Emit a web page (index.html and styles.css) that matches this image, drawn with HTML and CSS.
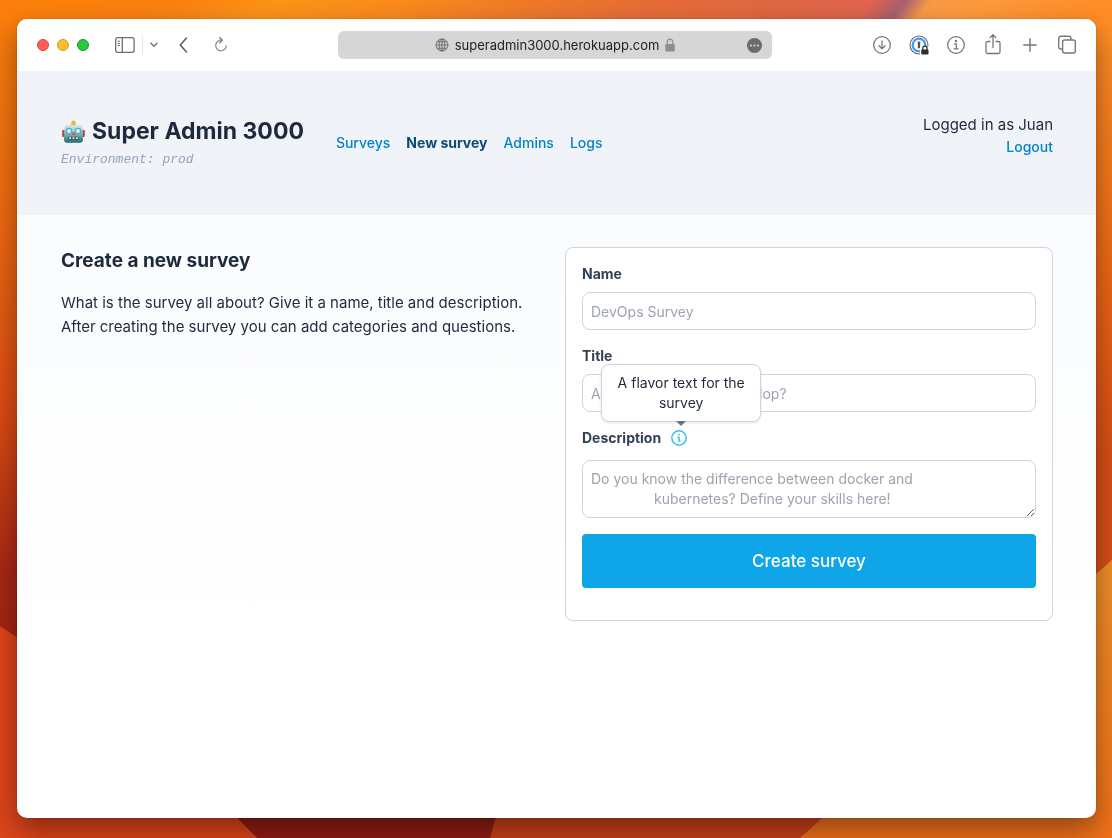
FILE: index.html
```html
<!DOCTYPE html>
<html lang="en">
<head>
<meta charset="utf-8">
<meta name="viewport" content="width=device-width, initial-scale=1">
<title>Super Admin 3000</title>
<link rel="stylesheet" href="styles.css">
</head>
<body>
<svg class="wallpaper" viewBox="0 0 1112 838" preserveAspectRatio="none" aria-hidden="true">
  <defs>
    <linearGradient id="left" x1="0" y1="0" x2="0" y2="1">
      <stop offset="0" stop-color="#fb7f0a"/><stop offset=".25" stop-color="#ee6a10"/><stop offset=".5" stop-color="#d94a14"/><stop offset=".68" stop-color="#a92814"/><stop offset=".78" stop-color="#a32414"/>
    </linearGradient>
    <linearGradient id="top" gradientUnits="userSpaceOnUse" x1="0" y1="0" x2="1112" y2="0" gradientTransform="skewX(-38)">
      <stop offset="0" stop-color="#fb7f0a"/><stop offset=".16" stop-color="#fb8210"/><stop offset=".25" stop-color="#fd9318"/><stop offset=".36" stop-color="#fa8b1c"/><stop offset=".47" stop-color="#f07a28"/><stop offset=".6" stop-color="#e56c38"/><stop offset=".72" stop-color="#e06644"/><stop offset=".785" stop-color="#e0644e"/><stop offset=".815" stop-color="#a86070"/><stop offset=".838" stop-color="#f89a48"/><stop offset=".88" stop-color="#ff9a3c"/><stop offset="1" stop-color="#ff8c26"/>
    </linearGradient>
    <linearGradient id="right" x1="0" y1="0" x2="0" y2="1">
      <stop offset="0" stop-color="#ff8f28"/><stop offset=".25" stop-color="#f5761a"/><stop offset=".45" stop-color="#ea6216"/><stop offset=".68" stop-color="#d84e16"/>
    </linearGradient>
    <linearGradient id="corner" x1="0" y1="0" x2="0" y2="1">
      <stop offset="0" stop-color="#f0902a"/><stop offset="1" stop-color="#f0701a"/>
    </linearGradient>
  </defs>
  <rect width="1112" height="838" fill="url(#left)"/>
  <rect x="900" y="19" width="212" height="640" fill="url(#right)"/>
  <rect width="1112" height="20" fill="url(#top)"/>
  <path d="M0 626L110 700L262 838H0Z" fill="#dd451a"/>
  <path d="M200 780L257 838H500V780Z" fill="#8f1c14"/>
  <path d="M506 780L490 838H1112V700H506Z" fill="#c8401a"/>
  <path d="M1112 560L800 838H1112Z" fill="url(#corner)"/>
</svg>
<div class="window">
  <div class="toolbar">
    <div class="tools">
      <div class="lights"><span class="light red"></span><span class="light yellow"></span><span class="light green"></span></div>
      <div class="sidebar-group">
        <button class="tool" aria-label="Sidebar"><svg width="20" height="16" viewBox="0 0 20 16" fill="none" stroke="#6e6e6e" stroke-width="1.3"><rect x=".7" y=".7" width="18.4" height="14.6" rx="2"/><path d="M7.3 1V15"/><path d="M2.7 4.2H5M2.7 6.4H5M2.7 8.6H5" stroke-width="1"/></svg></button>
        <span class="divider"></span>
        <button class="tool" aria-label="Tab groups"><svg width="8" height="6" viewBox="0 0 8 6" fill="none" stroke="#777" stroke-width="1.5" stroke-linecap="round" stroke-linejoin="round"><path d="M1 1.2L4 4.2L7 1.2"/></svg></button>
      </div>
      <button class="tool" aria-label="Back"><svg width="9" height="16" viewBox="0 0 9 16" fill="none" stroke="#5f5f5f" stroke-width="1.6" stroke-linecap="round" stroke-linejoin="round"><path d="M7.5 1L1.3 8L7.5 15"/></svg></button>
      <button class="tool reload" aria-label="Reload"><svg width="14" height="16" viewBox="0 0 14 16" fill="none" stroke="#999" stroke-width="1.4" stroke-linecap="round" stroke-linejoin="round"><path d="M7.6 3.2A5.3 5.3 0 1 0 12.3 8.600"/><path d="M5.800 .8L8.300 3.300L5.800 5.800" stroke="#777"/></svg></button>
    </div>
    <div class="address">
      <span class="site">
        <svg width="14" height="14" viewBox="0 0 14 14" fill="none" stroke="#666" stroke-width=".9"><circle cx="7" cy="7" r="6"/><ellipse cx="7" cy="7" rx="2.9" ry="6"/><path d="M7 1V13M1 7H13M2 3.8H12M2 10.2H12"/></svg>
        <span>superadmin3000.herokuapp.com</span>
        <svg width="10" height="14" viewBox="0 0 10 14"><path d="M2.3 6.500V4A2.700 2.900 0 0 1 7.700 4V6.500" fill="none" stroke="#929292" stroke-width="1.300"/><rect x=".3" y="6" width="9.400" height="7.500" rx="1.200" fill="#8e8e8e"/></svg>
      </span>
      <button class="tool more" aria-label="Page menu"><svg width="15" height="15" viewBox="0 0 15 15"><circle cx="7.500" cy="7.500" r="7.500" fill="#6b6b6b"/><g fill="#d6d6d6"><circle cx="4" cy="7.500" r="1.100"/><circle cx="7.500" cy="7.500" r="1.100"/><circle cx="11" cy="7.500" r="1.100"/></g></svg></button>
    </div>
    <div class="actions">
      <button class="tool" aria-label="Downloads"><svg width="20" height="22" viewBox="0 0 20 22" fill="none" stroke="#777" stroke-width="1.300" stroke-linecap="round" stroke-linejoin="round"><circle cx="10" cy="11" r="8.300"/><path d="M10 7V14.500M7 11.800L10 14.800L13 11.800"/></svg></button>
      <button class="tool" aria-label="Password manager"><svg width="20" height="22" viewBox="0 0 20 22" fill="none"><circle cx="10" cy="11" r="9" stroke="#666" stroke-width="1.100"/><circle cx="10" cy="11" r="6.300" stroke="#419df8" stroke-width="2.300"/><rect x="8.800" y="7.500" width="2.400" height="6.800" rx=".6" fill="#555"/><path d="M11 12.500H20V22H11Z" fill="#fff"/><path d="M13.800 16V14.200A2.100 2.100 0 0 1 18 14.200V16" stroke="#2d2d2d" stroke-width="1.300"/><rect x="12.300" y="15.500" width="7.200" height="5" rx=".8" fill="#2d2d2d"/></svg></button>
      <button class="tool" aria-label="Page info"><svg width="20" height="22" viewBox="0 0 20 22" fill="none" stroke="#777" stroke-width="1.300" stroke-linecap="round"><circle cx="10" cy="11" r="8.300"/><path d="M8.500 9.800H10.300V14.600M8.200 14.800H12.200"/><circle cx="10" cy="7.100" r=".6" fill="#777"/></svg></button>
      <button class="tool" aria-label="Share"><svg width="20" height="22" viewBox="0 0 20 22" fill="none" stroke="#777" stroke-width="1.300" stroke-linecap="round" stroke-linejoin="round"><path d="M7 7.500H4.500A1.500 1.500 0 0 0 3 9V18A1.500 1.500 0 0 0 4.500 19.500H15.500A1.500 1.500 0 0 0 17 18V9A1.500 1.500 0 0 0 15.500 7.500H13M10 13.500V1M7.200 3.600L10 .8L12.800 3.600"/></svg></button>
      <button class="tool" aria-label="New tab"><svg width="20" height="22" viewBox="0 0 20 22" stroke="#777" stroke-width="1.500" stroke-linecap="round"><path d="M10 4.800V17.200M3.800 11H16.200"/></svg></button>
      <button class="tool" aria-label="Tab overview"><svg width="20" height="22" viewBox="0 0 20 22" fill="none" stroke="#777" stroke-width="1.400" stroke-linejoin="round"><path d="M5.600 15H3.700A2 2 0 0 1 1.700 13V4.300A2 2 0 0 1 3.700 2.300H11.900A2 2 0 0 1 13.900 4.300V6"/><rect x="5.600" y="6" width="12.700" height="13" rx="2"/></svg></button>
    </div>
  </div>

  <header class="header">
    <div class="brand">
      <h1><svg class="robot" width="24" height="24" viewBox="0 0 24 24" aria-hidden="true"><defs><linearGradient id="face" x1="0" y1="0" x2="0" y2="1"><stop offset="0" stop-color="#dcebe4"/><stop offset=".4" stop-color="#9fc4c2"/><stop offset="1" stop-color="#1f6874"/></linearGradient></defs><rect x="1.200" y="10" width="3" height="7" rx="1" fill="#b8434a"/><rect x="20.800" y="10" width="3" height="7" rx="1" fill="#b8434a"/><path d="M9.800 4.600H15.200V6H9.800Z" fill="#a33c4a"/><circle cx="12.500" cy="2.600" r="2.200" fill="#f3b12c"/><path d="M6.500 4.800H18.500Q21.300 4.800 21.600 8L22 19.500Q21.900 22.800 18.800 22.800H6.200Q3.100 22.800 3 19.500L3.400 8Q3.700 4.800 6.500 4.800Z" fill="url(#face)"/><circle cx="8" cy="11" r="3.200" fill="#35b3d8"/><circle cx="17" cy="11" r="3.200" fill="#35b3d8"/><circle cx="8" cy="11" r="1.900" fill="#f2ffff"/><circle cx="17" cy="11" r="1.900" fill="#f2ffff"/><path d="M12.500 11.500L14.500 15H10.500Z" fill="#e44b3c"/><rect x="7" y="16.700" width="11" height="3" rx="1.300" fill="#315a63"/><path d="M8.200 18.200H10M11.600 18.200H13.400M15 18.200H16.800" stroke="#d9edeb" stroke-width="1.700"/></svg>Super Admin 3000</h1>
      <p class="environment">Environment: prod</p>
    </div>
    <nav class="nav">
      <a href="#surveys">Surveys</a>
      <a href="#new" class="current" aria-current="page">New survey</a>
      <a href="#admins">Admins</a>
      <a href="#logs">Logs</a>
    </nav>
    <div class="account">
      <p>Logged in as Juan</p>
      <a href="#logout">Logout</a>
    </div>
  </header>

  <main class="main">
    <section class="intro">
      <h2>Create a new survey</h2>
      <p>What is the survey all about? Give it a name, title and description. After creating the survey you can add categories and questions.</p>
    </section>
    <form class="card">
      <div class="field">
        <label for="name">Name</label>
        <input id="name" type="text" placeholder="DevOps Survey">
      </div>
      <div class="field">
        <label for="title">Title</label>
        <input id="title" type="text" placeholder="Are you prepared to develop?">
      </div>
      <div class="field description">
        <div class="label-row">
          <label for="description">Description</label>
          <span class="info" aria-describedby="tip">
            <svg width="18" height="18" viewBox="0 0 18 18" fill="none" stroke="#38bdf8" stroke-width="1.500" stroke-linecap="round" stroke-linejoin="round"><circle cx="9" cy="9" r="7.200"/><path d="M8 8.300H9V12H10"/><path d="M9 5.600V5.700" stroke-width="1.700"/></svg>
            <span class="tooltip" id="tip" role="tooltip">A flavor text for the survey</span>
          </span>
        </div>
        <textarea id="description" placeholder="Do you know the difference between docker and
                kubernetes? Define your skills here!"></textarea>
      </div>
      <button class="submit" type="submit">Create survey</button>
    </form>
  </main>
</div>
</body>
</html>
```
FILE: styles.css
```css
* {
  box-sizing: border-box;
}

body {
  display: flex;
  min-height: 100vh;
  margin: 0;
  padding: 19px 16px 20px 17px;
  font-family: Inter, "Liberation Sans", sans-serif;
  font-size: 15px;
  line-height: 24px;
  color: #1e293b;
}

h1, h2, p {
  margin: 0;
}

a {
  color: #0284c7;
  text-decoration: none;
}

button, input, textarea {
  font: inherit;
}

svg {
  display: block;
}

.wallpaper {
  position: fixed;
  inset: 0;
  z-index: -1;
  width: 100%;
  height: 100%;
}

.window {
  display: flex;
  flex: 1;
  flex-direction: column;
  overflow: hidden;
  border-radius: 10px;
  background: linear-gradient(#f8fafc, #ffffff 80%);
  box-shadow: 0 0 1px rgba(0, 0, 0, 0.6), 0 12px 28px rgba(0, 0, 0, 0.4);
}

/* Browser toolbar */
.toolbar {
  display: grid;
  grid-template-columns: 1fr 434px 1fr;
  align-items: center;
  height: 52px;
  padding: 0 19px 0 16px;
  background: #ffffff;
}

.tool {
  display: block;
  padding: 0;
  border: 0;
  background: none;
}

.tools, .lights, .sidebar-group, .actions, .site {
  display: flex;
  align-items: center;
}

.tools {
  padding-left: 4px;
}

.lights {
  gap: 8px;
  margin-right: 26px;
}

.light {
  width: 12px;
  height: 12px;
  border: 1px solid;
  border-radius: 50%;
}

.red {
  border-color: #d6453f;
  background: #ff5f57;
}

.yellow {
  border-color: #d79a22;
  background: #febc2e;
}

.green {
  border-color: #169c28;
  background: #28c840;
}

.sidebar-group {
  gap: 7px;
  margin-right: 21px;
}

.divider {
  width: 1px;
  height: 18px;
  background: #e5e5e5;
}

.reload {
  margin-left: 26px;
}

.address {
  display: grid;
  grid-template-columns: 1fr auto 1fr;
  align-items: center;
  height: 28px;
  padding: 0 10px;
  border-radius: 6px;
  background: #d6d6d6;
  color: #222222;
  font-size: 13px;
}

.site {
  grid-column: 2;
  gap: 6px;
}

.more {
  justify-self: end;
}

.actions {
  justify-content: flex-end;
  gap: 17px;
}

/* Application header */
.header {
  display: flex;
  align-items: flex-start;
  height: 144px;
  padding: 42px 43px 0 44px;
  background: #f0f4f9;
}

.header h1 {
  display: flex;
  align-items: center;
  gap: 7px;
  font-size: 23px;
  line-height: 37px;
  font-weight: 700;
}

.environment {
  color: #94a3b8;
  font-family: "Liberation Mono", monospace;
  font-size: 13px;
  font-style: italic;
  line-height: 20px;
}

.nav {
  display: flex;
  gap: 16px;
  margin: 18px 0 0 32px;
  font-size: 14px;
  font-weight: 500;
}

.nav .current {
  color: #0c4a6e;
  font-weight: 700;
}

.account {
  margin-left: auto;
  text-align: right;
}

.account a {
  display: block;
  font-size: 14px;
  font-weight: 500;
  line-height: 20px;
}

/* Page content */
.main {
  display: grid;
  grid-template-columns: 1fr 1fr;
  gap: 16px;
  align-items: start;
  padding: 32px 43px 32px 44px;
}

.intro h2 {
  margin-bottom: 16px;
  font-size: 19px;
  font-weight: 700;
  line-height: 28px;
}

.card {
  padding: 16px 16px 32px;
  border: 1px solid #cbd5e1;
  border-radius: 8px;
  background: #ffffff;
}

.field {
  display: flex;
  flex-direction: column;
  gap: 8px;
  margin-bottom: 16px;
  font-size: 14px;
  line-height: 20px;
}

.field label {
  color: #334155;
  font-weight: 700;
}

.field input, .field textarea {
  width: 100%;
  padding: 8px;
  border: 1px solid #cbd5e1;
  border-radius: 8px;
  background: #ffffff;
  color: #1e293b;
}

.field input {
  height: 38px;
}

.field textarea {
  display: block;
  height: 58px;
}

.field ::placeholder {
  color: #9ca3af;
}

.description {
  gap: 12px;
}

.label-row {
  display: flex;
  align-items: center;
  gap: 9px;
  height: 20px;
}

.info {
  position: relative;
}

.tooltip {
  position: absolute;
  bottom: 25px;
  left: -69px;
  width: 160px;
  padding: 8px;
  border: 1px solid #cbd5e1;
  border-radius: 8px;
  background: #ffffff;
  box-shadow: 0 1px 3px rgba(0, 0, 0, 0.1);
  text-align: center;
}

.tooltip::after {
  content: "";
  position: absolute;
  top: 100%;
  left: 50%;
  margin-left: -5px;
  border: 5px solid transparent;
  border-top-color: #64748b;
}

.submit {
  display: block;
  width: 100%;
  height: 54px;
  border: 0;
  border-radius: 4px;
  background: #0ea5e9;
  color: #ffffff;
  font-size: 17px;
  font-weight: 500;
}
```
